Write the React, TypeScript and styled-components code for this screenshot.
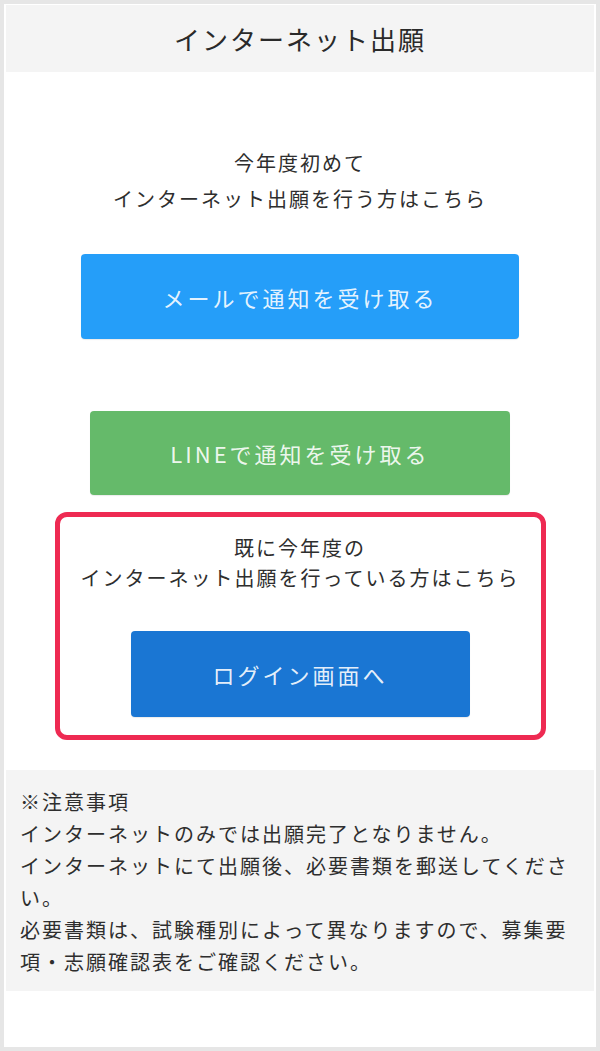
import * as React from 'react';
import styled, { createGlobalStyle } from 'styled-components';

const GlobalStyle = createGlobalStyle`
  html, body {
    margin: 0;
    padding: 0;
    background: #ffffff;
  }
  body {
    font-family: 'Noto Sans CJK JP', 'Noto Sans', sans-serif;
    color: #2e2e2e;
  }
`;

const Frame = styled.div`
  width: 600px;
  height: 1051px;
  box-sizing: border-box;
  border: 4px solid #e6e6e6;
  padding: 1px 2px 0;
  background: #ffffff;
  display: flex;
  flex-direction: column;
`;

const Header = styled.header`
  height: 67px;
  background: #f4f4f4;
  display: flex;
  align-items: center;
  justify-content: center;
  font-size: 26px;
  letter-spacing: 2px;
  color: #2a2a2a;
`;

const Main = styled.main`
  display: flex;
  flex-direction: column;
  align-items: center;
  padding-top: 73px;
`;

const Lead = styled.p<{ lineHeight: number }>`
  margin: 0;
  text-align: center;
  font-size: 20px;
  letter-spacing: 2px;
  line-height: ${p => p.lineHeight}px;
  color: #2e2e2e;
`;

const Button = styled.button<{ bg: string; w: number; h: number; top: number }>`
  display: flex;
  align-items: center;
  justify-content: center;
  width: ${p => p.w}px;
  height: ${p => p.h}px;
  margin-top: ${p => p.top}px;
  border: none;
  border-radius: 4px;
  background: ${p => p.bg};
  color: rgba(255, 255, 255, 0.9);
  font-family: inherit;
  font-size: 22px;
  letter-spacing: 3px;
  cursor: pointer;
  box-shadow: 0 1px 1px rgba(0, 0, 0, 0.08);
`;

const Highlight = styled.section`
  width: 491px;
  height: 228px;
  box-sizing: border-box;
  margin-top: 17px;
  border: 5px solid #ee2a52;
  border-radius: 12px;
  padding-top: 16px;
  display: flex;
  flex-direction: column;
  align-items: center;
`;

const Notice = styled.section`
  margin-top: 30px;
  background: #f4f4f4;
  padding: 16px 20px 13px 14px;
  font-size: 20px;
  letter-spacing: 2px;
  line-height: 32px;
  color: #2e2e2e;
  p {
    margin: 0;
  }
`;

const App: React.FC = () => {
  return (
    <>
      <GlobalStyle />
      <Frame>
        <Header>インターネット出願</Header>
        <Main>
          <Lead lineHeight={36}>
            今年度初めて
            <br />
            インターネット出願を行う方はこちら
          </Lead>
          <Button bg="#259ef9" w={438} h={85} top={37}>
            メールで通知を受け取る
          </Button>
          <Button bg="#65ba6a" w={420} h={84} top={72}>
            LINEで通知を受け取る
          </Button>
          <Highlight>
            <Lead lineHeight={30}>
              既に今年度の
              <br />
              インターネット出願を行っている方はこちら
            </Lead>
            <Button bg="#1a76d3" w={339} h={86} top={38}>
              ログイン画面へ
            </Button>
          </Highlight>
        </Main>
        <Notice>
          <p>※注意事項</p>
          <p>インターネットのみでは出願完了となりません。</p>
          <p>インターネットにて出願後、必要書類を郵送してください。</p>
          <p>必要書類は、試験種別によって異なりますので、募集要項・志願確認表をご確認ください。</p>
        </Notice>
      </Frame>
    </>
  );
};

export default App;
